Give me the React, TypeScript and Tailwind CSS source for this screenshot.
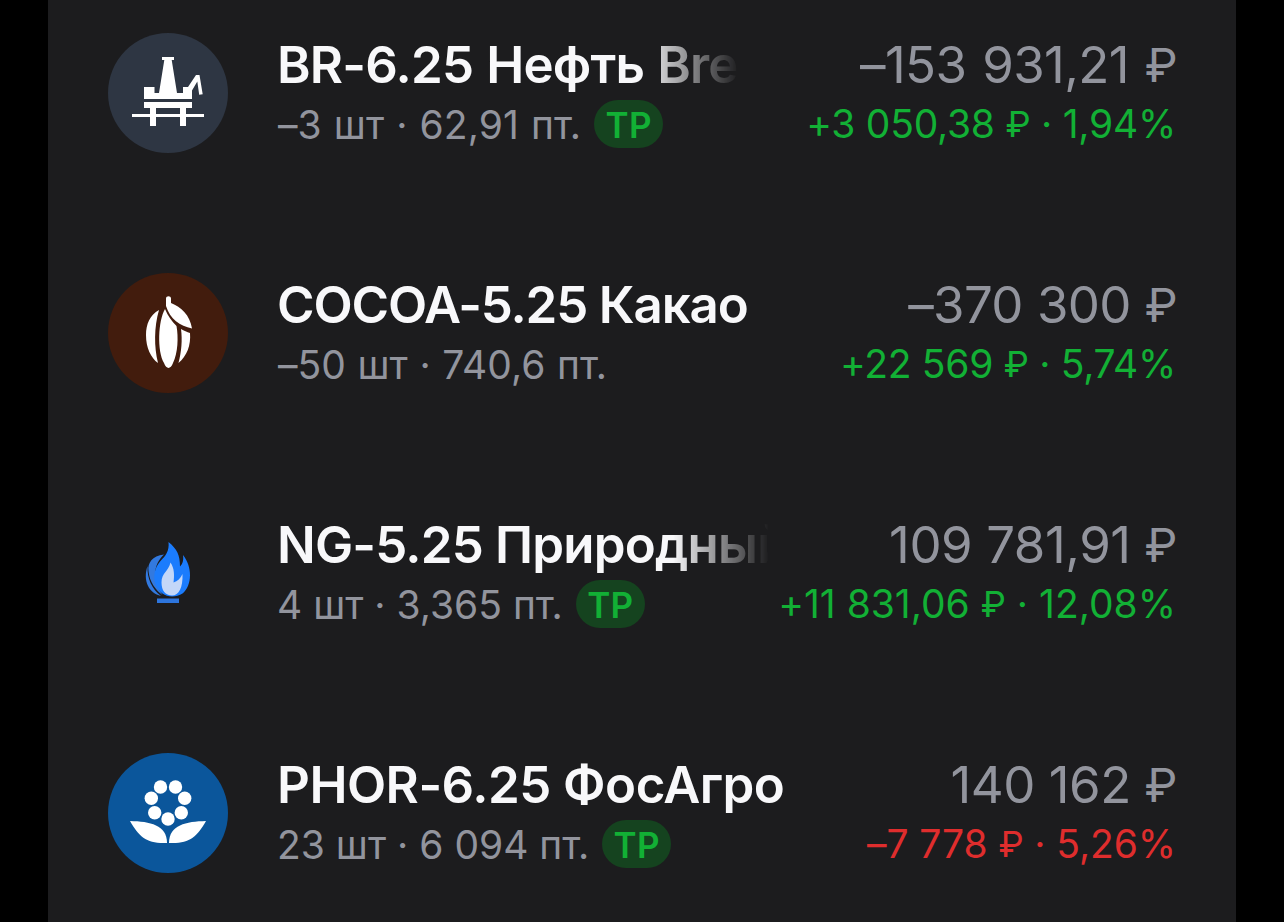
import type { ReactNode } from 'react'

interface Position {
  id: string
  name: string
  nameClass: string
  details: string
  detailsClass: string
  takeProfit: boolean
  value: string
  valueClass: string
  change: string
  percent: string
  changeClass: string
  icon: ReactNode
}

const positions: Position[] = [
  {
    id: 'br',
    name: 'BR-6.25 Нефть Bre',
    nameClass: 'tracking-[-0.8px] [word-spacing:1px] [mask-image:linear-gradient(to_right,#000_365px,transparent_462px)]',
    details: '–3 шт · 62,91 пт.',
    detailsClass: 'pl-px tracking-[0.1px] [word-spacing:0.9px]',
    takeProfit: true,
    value: '–153 931,21',
    valueClass: 'tracking-[-0.6px] [word-spacing:2px]',
    change: '+3 050,38',
    percent: '1,94%',
    changeClass: 'tracking-[-0.25px] text-[#12b035]',
    icon: <OilIcon />
  },
  {
    id: 'cocoa',
    name: 'COCOA-5.25 Какао',
    nameClass: 'tracking-[-1.15px]',
    details: '–50 шт · 740,6 пт.',
    detailsClass: 'pl-px [word-spacing:0.7px]',
    takeProfit: false,
    value: '–370 300',
    valueClass: 'tracking-[-0.7px] [word-spacing:0.5px]',
    change: '+22 569',
    percent: '5,74%',
    changeClass: 'tracking-[-0.3px] text-[#12b035]',
    icon: <CocoaIcon />
  },
  {
    id: 'ng',
    name: 'NG-5.25 Природный',
    nameClass: 'w-[492px] tracking-[-0.8px] [mask-image:linear-gradient(to_right,#000_396px,transparent_492px)]',
    details: '4 шт · 3,365 пт.',
    detailsClass: '',
    takeProfit: true,
    value: '109 781,91',
    valueClass: 'tracking-[-0.45px]',
    change: '+11 831,06',
    percent: '12,08%',
    changeClass: 'text-[#12b035]',
    icon: <GasIcon />
  },
  {
    id: 'phor',
    name: 'PHOR-6.25 ФосАгро',
    nameClass: 'tracking-[-0.5px]',
    details: '23 шт · 6 094 пт.',
    detailsClass: '',
    takeProfit: true,
    value: '140 162',
    valueClass: 'tracking-[-0.5px]',
    change: '–7 778',
    percent: '5,26%',
    changeClass: 'tracking-[-0.1px] text-[#df2d2d]',
    icon: <PhosAgroIcon />
  }
]

export default function App() {
  return (
    <div className="h-[922px] overflow-hidden bg-black px-12 font-['Inter',sans-serif] [font-feature-settings:'calt'_0]">
      <div className="h-full bg-[#1c1c1e]">
        {positions.map(position => (
          <PositionRow key={position.id} position={position} />
        ))}
      </div>
    </div>
  )
}

function PositionRow({ position }: { position: Position }) {
  return (
    <div className="flex h-[240px] items-start justify-between pt-[33px] pr-[59px] pl-[60px] whitespace-nowrap">
      <div className="flex gap-[49px]">
        {position.icon}
        <div className="flex flex-col items-start gap-[5px] pt-0.5">
          <div className={`h-[60px] text-[51px] leading-[60px] font-semibold text-[#f8f8fa] ${position.nameClass}`}>
            {position.name}
          </div>
          <div className="flex h-12 items-center gap-[13px] text-[39px] leading-[48px] text-[#92949d]">
            <span className={`pt-0.5 ${position.detailsClass}`}>{position.details}</span>
            {position.takeProfit && <TakeProfitBadge />}
          </div>
        </div>
      </div>
      <div className="flex flex-col items-end gap-[5px] pt-0.5">
        <div className={`h-[60px] text-[51px] leading-[60px] text-[#92949d] ${position.valueClass}`}>
          {position.value} <Ruble />
        </div>
        <div className={`mr-px h-12 text-[39px] leading-[48px] ${position.changeClass}`}>
          {position.change} <Ruble /> · {position.percent}
        </div>
      </div>
    </div>
  )
}

// The currency sign is a little smaller than the digits beside it
function Ruble() {
  return <span className="relative -top-px text-[0.92em] leading-none">₽</span>
}

function TakeProfitBadge() {
  return (
    <span className="flex h-12 w-[69px] items-center justify-center rounded-[24px] bg-[#15431f] pt-px text-[35px] font-semibold tracking-[0.3px] text-[#12b035]">
      TP
    </span>
  )
}

function OilIcon() {
  return (
    <svg viewBox="0 0 120 120" className="size-[120px] shrink-0">
      <circle cx="60" cy="60" r="60" fill="#2e3643" />
      <g fill="#fff">
        <path d="M54 24h12v3h-2.300L69 60h6v-6h5l8-12h3.500l3.200 19.300-3.500.500L89.300 48.500 84 57.500V66H36V54h10.500v6H51l5.300-33H54z" />
        <path d="M36 69h48v6h-6v6h18v3H78v9h-6v-9H48v9h-6v-9H24v-3h18v-6h-6zM48 75v6h24v-6z" />
      </g>
    </svg>
  )
}

function CocoaIcon() {
  return (
    <svg viewBox="0 0 120 120" className="size-[120px] shrink-0">
      <circle cx="60" cy="60" r="60" fill="#421c0d" />
      <g fill="#fff">
        <path d="M51 37C42 42 38 51 38 62c0 13 5 23 12 28-4-16-4-36 1-53z" />
        <path d="M57 36c-7 12-8 42-1 54 2.500 6.500 6.500 6.500 9 0 5-10 5.500-26 3.500-37C63.500 48 60 43 57 36z" />
        <path d="M73 56c3 1.800 6 3 9 4C83 72 79 83 70.500 90c3-11 4-23 2.500-34z" />
        <path d="M58 25.500c0-3 5-3 5 0V30c10 4 19 12 21 25.500C72 53 62 46 58 33z" />
      </g>
    </svg>
  )
}

function GasIcon() {
  return (
    <svg viewBox="0 0 120 120" className="size-[120px] shrink-0">
      <path fill="#3279df" d="M39.500 53C34.500 68 41 80 53 83 44 76 39 66 39.500 53z" />
      <path fill="#3279df" d="M56 41.500C44 43 39.500 50 40.500 58c1 11 7 19 14 24-10-14-10-30 1.500-40.500z" />
      <path
        fill="#1b7cfd"
        d="M60.500 29c1 9-3 14-8 19-9 10-8 25 2 32.500 5 4 14 4 20 0 10-8 10-27 .5-38.500.8 6-.5 9-3 11.500C72 42 69 36 60.500 29z"
      />
      <path fill="#c3d7f8" d="M62.500 49.500c-2 9-9 10-9 20 0 8 4 13 10.500 13 7 0 11-8 10.500-21.500-2 4.500-5 7-9 8.500 1-7 1-14-3-20z" />
      <path fill="#2d75dd" d="M49 85.500h22v4.500H49z" />
    </svg>
  )
}

function PhosAgroIcon() {
  return (
    <svg viewBox="0 0 120 120" className="size-[120px] shrink-0">
      <circle cx="60" cy="60" r="60" fill="#0b569b" />
      <g fill="#fff">
        <circle cx="52.500" cy="34" r="6.700" />
        <circle cx="67.500" cy="34" r="6.700" />
        <circle cx="43.300" cy="45.300" r="6.700" />
        <circle cx="76.700" cy="45.300" r="6.700" />
        <circle cx="46.700" cy="59.700" r="6.700" />
        <circle cx="73.300" cy="59.700" r="6.700" />
        <circle cx="60" cy="66" r="6.700" />
        <path d="M22 68c20 .5 37 4 37 22C39 91 31 84 22 68z" />
        <path d="M98 68c-20 .5-37 4-37 22 20 1 28-6 37-22z" />
      </g>
    </svg>
  )
}
